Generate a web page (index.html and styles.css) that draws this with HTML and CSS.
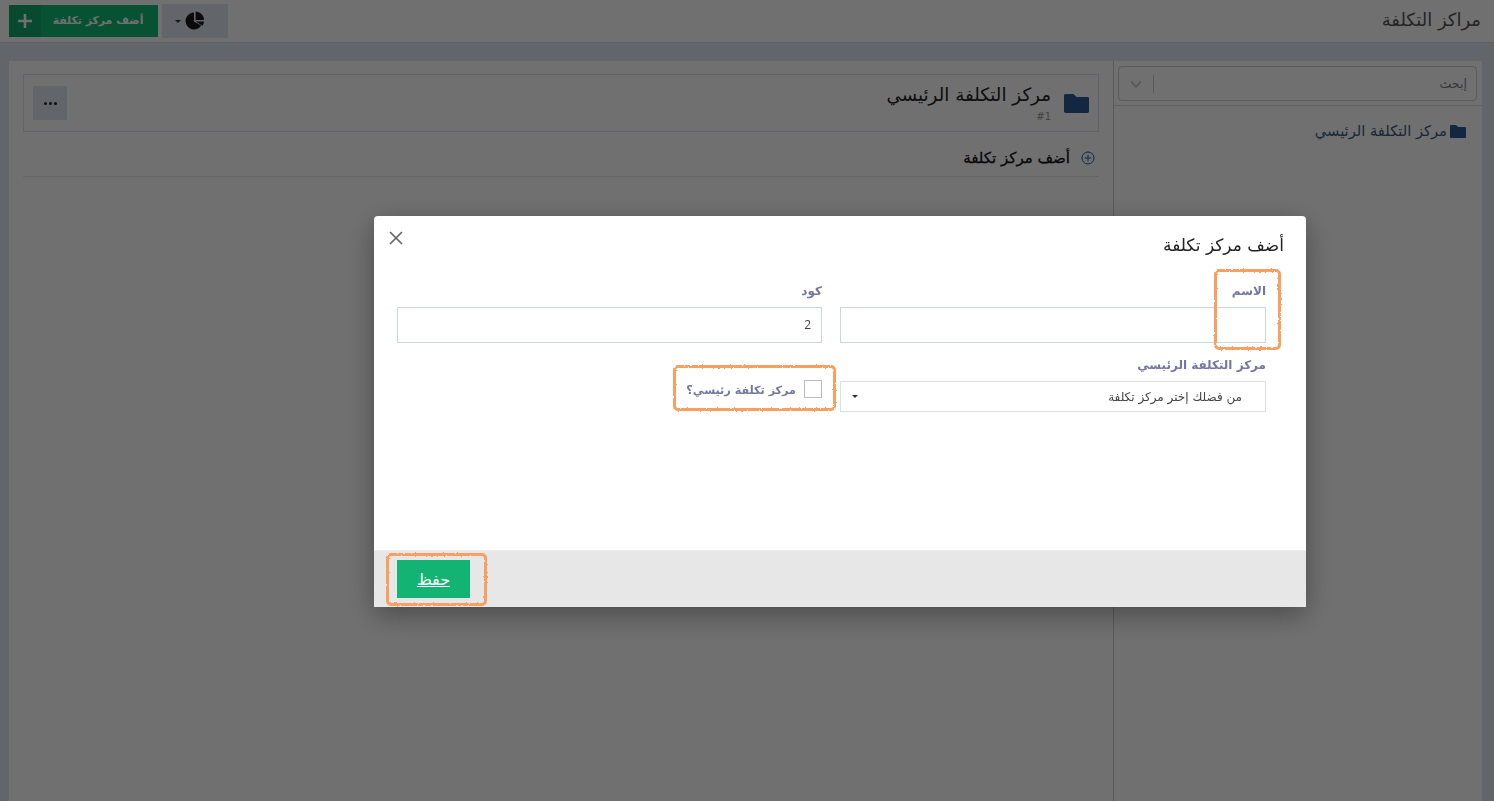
FILE: index.html
```html
<!DOCTYPE html>
<html lang="ar" dir="rtl">
<head>
<meta charset="utf-8">
<title>مراكز التكلفة</title>
<link rel="stylesheet" href="styles.css">
</head>
<body>
<svg class="defs" width="0" height="0" aria-hidden="true"><filter id="rough" x="-10%" y="-10%" width="120%" height="120%"><feTurbulence type="fractalNoise" baseFrequency="0.35" numOctaves="2" seed="4"/><feDisplacementMap in="SourceGraphic" scale="2.5"/></filter></svg>
<header class="topbar">
  <h1 class="page-title">مراكز التكلفة</h1>
  <div class="top-actions">
    <button class="report-btn" type="button">
      <svg class="pie" viewBox="0 0 20 20" aria-hidden="true"><path d="M9 1.5A8.5 8.5 0 1 0 16.2 14.6L9 10.4Z"/><path d="M10.6 .5A8.5 8.5 0 0 1 19 8.9H10.6Z"/><path d="M10.8 10.5H19a8.5 8.5 0 0 1-1.6 4.3Z"/></svg>
      <span class="caret"></span>
    </button>
    <button class="add-btn" type="button">
      <span class="add-label">أضف مركز تكلفة</span>
      <span class="add-plus"><svg viewBox="0 0 14 14" aria-hidden="true"><path d="M7 0v14M0 7h14"/></svg></span>
    </button>
  </div>
</header>
<main class="content">
  <aside class="sidebar">
    <div class="search-wrap">
      <div class="search">
        <span class="search-text">إبحث</span>
        <span class="search-sep"></span>
        <svg class="search-chev" viewBox="0 0 12 8" aria-hidden="true"><path d="M1 1.5l5 5 5-5"/></svg>
      </div>
    </div>
    <div class="tree-item">
      <svg class="folder-sm" viewBox="0 0 16 13" aria-hidden="true"><path d="M1 0h5l2 2h7a1 1 0 0 1 1 1v9a1 1 0 0 1-1 1H1a1 1 0 0 1-1-1V1a1 1 0 0 1 1-1z"/></svg>
      <span>مركز التكلفة الرئيسي</span>
    </div>
  </aside>
  <section class="panel">
    <div class="cost-card">
      <svg class="folder-lg" viewBox="0 0 16 13" preserveAspectRatio="none" aria-hidden="true"><path d="M1 0h5l2 2h7a1 1 0 0 1 1 1v9a1 1 0 0 1-1 1H1a1 1 0 0 1-1-1V1a1 1 0 0 1 1-1z"/></svg>
      <div class="cost-info">
        <div class="cost-name">مركز التكلفة الرئيسي</div>
        <div class="cost-num">#1</div>
      </div>
      <button class="dots" type="button" aria-label="more"><span></span><span></span><span></span></button>
    </div>
    <div class="add-row">
      <svg class="plus-circle" viewBox="0 0 14 14" aria-hidden="true"><circle cx="7" cy="7" r="6"/><path d="M7 3.8v6.4M3.8 7h6.4"/></svg>
      <span>أضف مركز تكلفة</span>
    </div>
  </section>
</main>

<div class="backdrop"></div>

<div class="modal" role="dialog">
  <div class="modal-body">
    <div class="modal-head">
      <h2 class="modal-title">أضف مركز تكلفة</h2>
      <svg class="close" viewBox="0 0 14 14" aria-hidden="true"><path d="M1 1l12 12M13 1L1 13"/></svg>
    </div>
    <div class="form-grid">
      <div class="field">
        <label class="label">الاسم</label>
        <div class="input"></div>
        <span class="mark mark-name"></span>
      </div>
      <div class="field">
        <label class="label">كود</label>
        <div class="input input-val">2</div>
      </div>
      <div class="field">
        <label class="label">مركز التكلفة الرئيسي</label>
        <div class="select">
          <span>من فضلك إختر مركز تكلفة</span>
          <span class="select-caret"></span>
        </div>
      </div>
      <div class="check-field">
        <span class="checkbox"></span>
        <span class="check-label">مركز تكلفة رئيسي؟</span>
        <span class="mark mark-check"></span>
      </div>
    </div>
  </div>
  <div class="modal-foot">
    <button class="save" type="button">حفظ</button>
    <span class="mark mark-save"></span>
  </div>
</div>
</body>
</html>
```
FILE: styles.css
```css
* { box-sizing: border-box; }
html, body { height: 100%; }
body {
  margin: 0;
  height: 801px;
  overflow: hidden;
  background: #dfe7f0;
  font-family: "DejaVu Sans", "Noto Sans", sans-serif;
  color: #333;
  display: flex;
  flex-direction: column;
}
button { font-family: inherit; border: 0; padding: 0; }
.defs { position: absolute; }

.topbar {
  height: 43px;
  flex: none;
  background: #fff;
  border-bottom: 1px solid #d5dce4;
  display: flex;
  align-items: flex-start;
  justify-content: space-between;
  padding: 0 13px 0 9px;
}
.page-title { margin: 5px 0 0; font-size: 18px; line-height: 30px; font-weight: 400; color: #555; }
.top-actions { display: flex; gap: 4px; margin-top: 4px; }
.add-btn {
  width: 149px; height: 32px; margin-top: 1px;
  background: #14bc78;
  display: flex;
}
.add-label { flex: 1; line-height: 31px; color: #fff; text-align: center; font-size: 10.9px; font-weight: 700; padding-right: 3px; }
.add-plus { width: 32px; height: 32px; background: #12a86c; display: flex; align-items: center; justify-content: center; }
.add-plus svg { width: 14px; height: 14px; fill: none; stroke: #fff; stroke-width: 2.6; }
.report-btn {
  width: 66px; height: 34px;
  background: #dfe6f1;
  display: flex; align-items: center; justify-content: center; gap: 4px;
  padding-right: 10px;
}
.pie { width: 20px; height: 20px; fill: #1a1a1e; }
.caret { width: 0; height: 0; border: 3px solid transparent; border-top: 3.5px solid #333; border-bottom: 0; }

.content {
  flex: 1;
  display: flex;
  padding: 18px 12px 0 0;
  min-height: 0;
}
.sidebar { width: 369px; flex: none; background: #fff; border-left: 1px solid #c9ced4; }
.search-wrap { padding: 5px 5px 5px 4px; border-bottom: 1px solid #d8d8d8; height: 45px; }
.search {
  height: 35px; border: 1px solid #ccc; border-radius: 4px;
  display: flex; align-items: center;
  padding: 0 9px 0 11px;
  font-size: 12.6px; color: #808080;
}
.search-text { flex: 1; }
.search-sep { width: 1px; height: 18px; background: #ccc; margin-left: 11px; }
.search-chev { width: 12px; height: 8px; fill: none; stroke: #ccc; stroke-width: 2; }
.tree-item {
  display: flex; align-items: center; gap: 3px;
  margin: 16px 16px 0 0;
  font-size: 14.7px; line-height: 18px; color: #3c5a80;
}
.folder-sm { width: 16px; height: 13px; fill: #2c5a94; }

.panel { flex: 1; margin-left: 9px; background: #fff; padding: 13px 14px 0; }
.cost-card {
  height: 58px; border: 1px solid #dbe3ed; display: flex; align-items: flex-start; padding-right: 9px; padding-left: 9px;
}
.folder-lg { width: 25px; height: 19px; fill: #2c5a94; margin-top: 19px; flex: none; }
.cost-info { flex: 1; margin-right: 13px; }
.cost-name { font-size: 18.3px; line-height: 22px; margin-top: 9px; color: #222; }
.cost-num { font-size: 10px; line-height: 14px; color: #999; margin-top: 4px; }
.dots {
  width: 34px; height: 34px; margin-top: 11px; background: #dfe6f1;
  display: flex; align-items: center; justify-content: center; gap: 2px;
}
.dots span { width: 3px; height: 3px; border-radius: 50%; background: #222; }
.add-row {
  height: 45px; border-bottom: 1px solid #e5e7ea;
  display: flex; align-items: center; gap: 11px;
  padding: 7px 4px 0 0;
  font-size: 15px; color: #111;
  -webkit-text-stroke: .3px #111;
}
.plus-circle { width: 14px; height: 14px; fill: none; stroke: #2c5a94; stroke-width: 1; }

.backdrop { position: fixed; inset: 0; background: rgba(0,0,0,.56); }

.modal {
  position: fixed; left: 374px; top: 216px; width: 932px; height: 391px;
  background: #fff; border-radius: 4px;
  box-shadow: 0 8px 28px rgba(0,0,0,.35);
  display: flex; flex-direction: column;
}
.modal-body { flex: 1; padding: 0 40px 0 23px; }
.modal-head { height: 67px; display: flex; justify-content: space-between; align-items: flex-start; margin-right: -18px; }
.modal-title { margin: 18px 0 0; font-size: 17px; line-height: 22px; font-weight: 400; color: #222; }
.close { width: 14px; height: 14px; margin: 15px 0 0 -8px; fill: none; stroke: #666; stroke-width: 1.7; }
.form-grid { display: grid; grid-template-columns: 426px 425px; column-gap: 18px; row-gap: 14px; }
.field { position: relative; }
.label { display: block; font-size: 12px; font-weight: 700; line-height: 16px; color: #7278a3; margin-bottom: 8px; }
.input { height: 36px; border: 1px solid #cdd5df; background: #fff; }
.input-val { padding: 0 10px; line-height: 34px; font-size: 12px; color: #444; font-family: "Open Sans", sans-serif; }
.select {
  height: 31px; border: 1px solid #dcdfe3; display: flex; align-items: center; justify-content: space-between;
  padding: 0 23px 0 11px; font-size: 12px; color: #444;
}
.select-caret { width: 0; height: 0; border: 3px solid transparent; border-top: 3.5px solid #333; border-bottom: 0; }
.check-field { position: relative; display: flex; align-items: flex-start; gap: 8px; padding-top: 23px; height: 60px; }
.checkbox { width: 18px; height: 18px; border: 1px solid #bbb; background: #fff; flex: none; }
.check-label { font-size: 11.2px; font-weight: 700; color: #7278a3; line-height: 22px; }

.modal-foot { position: relative; height: 57px; flex: none; background: #e7e7e7; border-top: 1px solid #eee; display: flex; justify-content: flex-end; padding: 9px 0 0 23px; }
.save { width: 73px; height: 38px; background: #13b373; color: #fff; font-size: 16px; text-decoration: underline; }

.mark { position: absolute; border: 3px solid #fa9f60; border-radius: 5px; pointer-events: none; filter: url(#rough); }
.mark-name { right: -15px; top: -14px; width: 67px; height: 81px; }
.mark-check { right: -14px; top: 8px; width: 163px; height: 46px; }
.mark-save { left: 12px; top: 2px; width: 101px; height: 53px; }
```
